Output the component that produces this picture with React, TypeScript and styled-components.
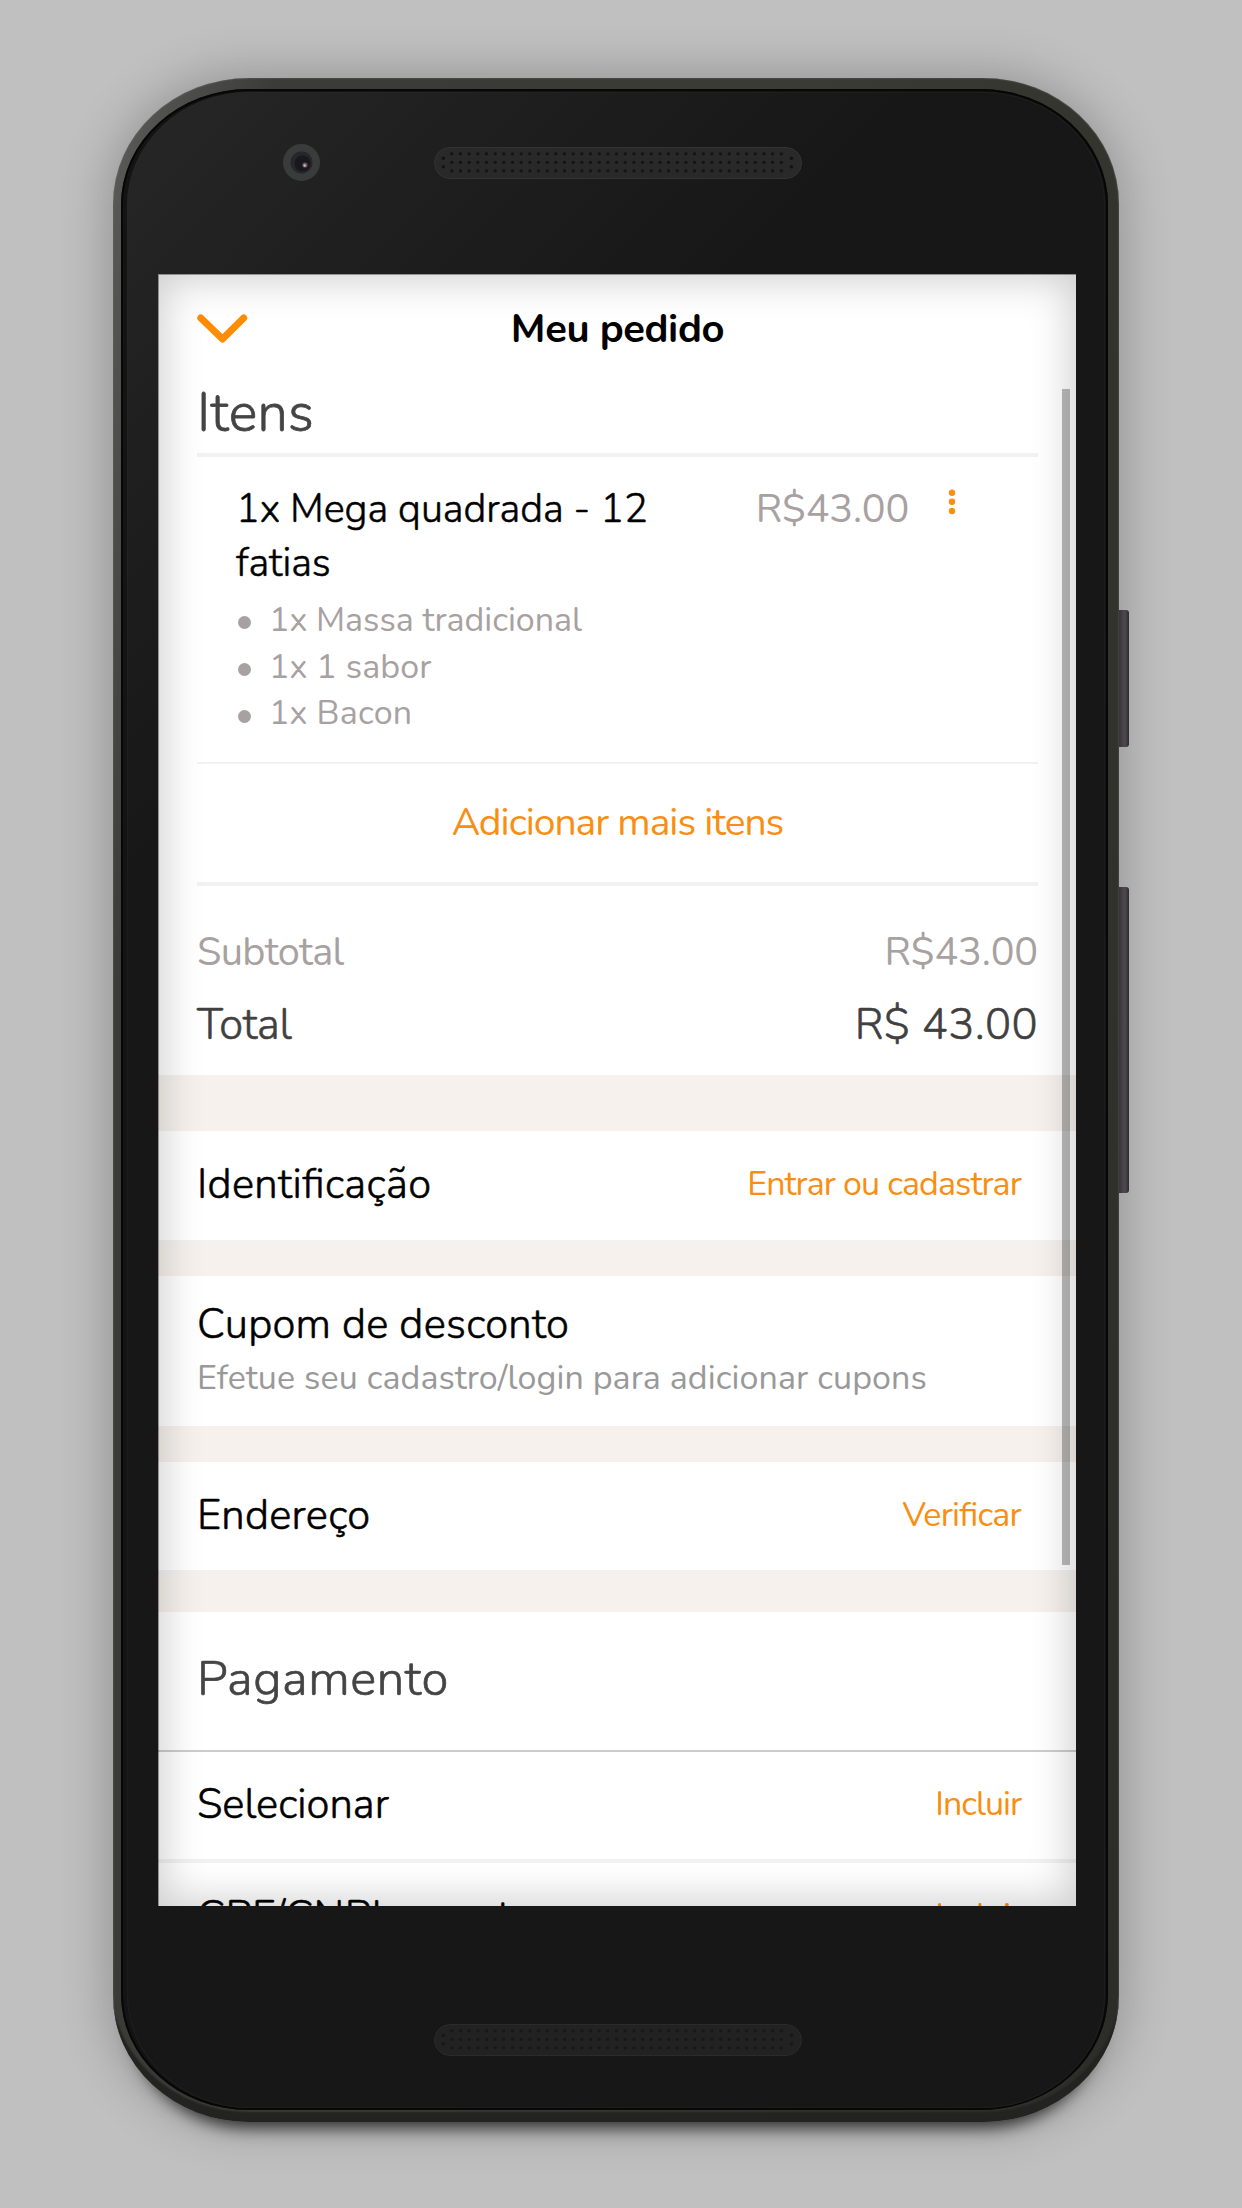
import React from "react";
import styled, { createGlobalStyle, css } from "styled-components";

const GlobalStyle = createGlobalStyle`
  * {
    box-sizing: border-box;
  }

  body {
    margin: 0;
    background-color: #c0c0c0;
    font-family: "Nunito", "Lato", sans-serif;
    font-feature-settings: "liga" 1;
  }

  h1, h2, h3, p, ul {
    margin: 0;
    padding: 0;
    font-weight: 400;
  }
`;

const Stage = styled.div`
  display: flex;
  align-items: flex-start;
  width: 1242px;
  height: 2208px;
  padding: 78px 0 0 113px;
  overflow: hidden;
  background-color: #c0c0c0;
`;

const Phone = styled.div`
  width: 1006px;
  height: 2044px;
  padding: 11px 11px 12px 8px;
  border-radius: 136px / 126px;
  background: linear-gradient(
    100deg,
    #5c5d5b 0%,
    #3b3c38 12%,
    #3a3b34 50%,
    #2c2d28 100%
  );
  box-shadow: 0 0 50px 4px rgba(0, 0, 0, 0.24),
    0 26px 16px -20px rgba(0, 0, 0, 0.7), inset 0 -12px 2px -2px #232422,
    inset 0 0 2px #6c6d6a;
`;

const Bezel = styled.div`
  height: 100%;
  padding: 3px 3px 2px 6px;
  border-radius: 128px / 116px;
  background-color: #141414;
  box-shadow: inset 0 0 0 2px #070707;
`;

const Glass = styled.div`
  height: 100%;
  padding-left: 31px;
  border-radius: 122px / 114px;
  background: linear-gradient(135deg, #272727 0, #1f1f1f 260px, #171717 560px);
  box-shadow: inset 0 0 2px #2e2e2e;
`;

const TopBezel = styled.div`
  display: flex;
  align-items: center;
  height: 182px;
  padding: 0 0 41px 125px;
`;

const BottomBezel = styled.div`
  padding: 118px 0 0 276px;
`;

const Camera = styled.svg`
  width: 37px;
  height: 37px;
  margin-right: 114px;
`;

const SpeakerGrille = styled.svg`
  display: block;
  width: 368px;
  height: 32px;
`;

const SideKeys = styled.div`
  display: flex;
  flex-direction: column;
  gap: 140px;
  padding-top: 532px;
`;

const SideKey = styled.div<{ $height: number }>`
  width: 10px;
  height: ${(p) => p.$height}px;
  border-radius: 0 3px 3px 0;
  background: linear-gradient(to right, #37353a, #4e4a50 60%, #2b2a2c);
`;

const Screen = styled.div`
  position: relative;
  display: flex;
  flex-direction: column;
  width: 918px;
  height: 1632px;
  overflow: hidden;
  background-color: #ffffff;

  /* shading around the edges of the display */
  &::after {
    content: "";
    position: absolute;
    inset: 0;
    box-shadow: inset 1px 1px 0 rgba(0, 0, 0, 0.35),
      inset 0 0 42px 5px rgba(0, 0, 0, 0.2);
    pointer-events: none;
  }
`;

const ScrollThumb = styled.div`
  position: absolute;
  top: 115px;
  right: 6px;
  width: 8px;
  height: 1176px;
  background-color: rgba(0, 0, 0, 0.27);
`;

const Header = styled.header`
  display: grid;
  grid-template-columns: 52px 1fr 52px;
  align-items: center;
  flex-shrink: 0;
  height: 109px;
  padding: 0 37px 0 38px;
`;

const Chevron = styled.svg`
  width: 52px;
  height: 32px;
`;

const HeaderTitle = styled.h1`
  font-size: 40px;
  font-weight: 700;
  line-height: 54px;
  letter-spacing: -0.4px;
  text-align: center;
  color: #000000;
`;

interface TextProps {
  $tracking?: number;
}

const tracking = css<TextProps>`
  letter-spacing: ${(p) => p.$tracking || 0}px;
`;

/* light face with a touch of stroke, sits between light and regular */
const bookWeight = css`
  font-weight: 300;
  -webkit-text-stroke: 0.014em currentColor;
`;

const Content = styled.section`
  flex-shrink: 0;
  margin: 0 38px 0 39px;
`;

const ItemsTitle = styled.h2`
  height: 74px;
  border-bottom: 4px solid #f2f2f2;
  font-size: 54px;
  line-height: 60px;
  letter-spacing: 0.3px;
  color: #444444;
  ${bookWeight}
`;

const Item = styled.div`
  height: 307px;
  padding: 26px 82px 0 39px;
  border-bottom: 2px solid #f2f2f2;
`;

const ItemTop = styled.div`
  display: flex;
  align-items: flex-start;
`;

const ItemName = styled.h3`
  width: 450px;
  font-size: 39.7px;
  line-height: 53.5px;
  letter-spacing: -0.05px;
  color: #000000;
  ${bookWeight}
`;

const ItemPrice = styled.span`
  margin-left: auto;
  font-size: 39.7px;
  line-height: 53.5px;
  letter-spacing: -0.2px;
  color: #a8a1a1;
`;

const MenuDots = styled.svg`
  width: 8px;
  height: 40px;
  margin-left: 39px;
`;

const Options = styled.ul`
  margin-top: 7px;
  list-style: none;
`;

const Option = styled.li<TextProps>`
  display: flex;
  align-items: center;
  font-size: 34px;
  line-height: 46.7px;
  color: #a8a1a1;
  ${tracking}

  &::before {
    content: "";
    width: 13px;
    height: 13px;
    margin: 5px 18px 0 2px;
    border-radius: 50%;
    background-color: #a8a1a1;
  }
`;

const AddMore = styled.button`
  display: block;
  width: 100%;
  height: 122px;
  padding: 0 0 1px;
  border: 0;
  border-bottom: 4px solid #f2f2f2;
  background: none;
  font-family: inherit;
  font-size: 39px;
  letter-spacing: -1px;
  color: #f88f12;
`;

const Totals = styled.div`
  height: 189px;
  padding-top: 39px;
`;

const Subtotal = styled.div`
  display: flex;
  justify-content: space-between;
  font-size: 39.7px;
  line-height: 54px;
  color: #a8a1a1;
`;

const Total = styled.div`
  display: flex;
  justify-content: space-between;
  margin-top: 16px;
  font-size: 43.5px;
  line-height: 60px;
  color: #404040;
  ${bookWeight}
`;

const TotalText = styled.span<TextProps>`
  ${tracking}
`;

const Band = styled.div<{ $height: number; $edge?: boolean }>`
  flex-shrink: 0;
  height: ${(p) => p.$height}px;
  border-top: ${(p) => (p.$edge ? "4px solid #f3f2f1" : "0")};
  background-color: #f6f1ed;
`;

const Row = styled.div<{ $height: number; $border?: boolean }>`
  display: flex;
  align-items: center;
  justify-content: space-between;
  flex-shrink: 0;
  height: ${(p) => p.$height}px;
  padding: 0 55px 3px 39px;
  border-bottom: ${(p) => (p.$border ? "4px solid #f2f2f2" : "0")};
`;

const RowLabel = styled.h3<TextProps>`
  padding-top: 2px;
  font-size: 41.8px;
  line-height: 54px;
  color: #000000;
  ${bookWeight}
  ${tracking}
`;

const RowAction = styled.button<TextProps>`
  padding: 0;
  border: 0;
  background: none;
  font-family: inherit;
  font-feature-settings: inherit;
  font-size: 34px;
  line-height: 46px;
  color: #f88f12;
  ${tracking}
`;

const Coupon = styled.div`
  flex-shrink: 0;
  height: 150px;
  padding: 20px 38px 0 39px;
`;

const CouponHint = styled.p`
  margin-top: 3px;
  font-size: 34px;
  line-height: 47px;
  letter-spacing: 0.09px;
  color: #999999;
`;

const PaymentTitle = styled.h2`
  flex-shrink: 0;
  height: 140px;
  padding: 0 39px;
  border-bottom: 2px solid #cccccc;
  font-size: 49px;
  line-height: 134px;
  letter-spacing: 0.6px;
  color: #444444;
  ${bookWeight}
`;

interface SpeakerProps {
  id: string;
  fill: string;
  rim: string;
  hole: string;
}

const Speaker = ({ id, fill, rim, hole }: SpeakerProps) => (
  <SpeakerGrille viewBox="0 0 368 32">
    <defs>
      <pattern id={id} x="13.5" y="2.6" width="8.67" height="8.5" patternUnits="userSpaceOnUse">
        <circle cx="4.3" cy="4.3" r="1.7" fill={hole} />
      </pattern>
    </defs>
    <rect x="0.5" y="0.5" width="367" height="31" rx="15.5" fill={fill} stroke={rim} />
    <rect x="13.5" y="2.6" width="338" height="25.5" fill={`url(#${id})`} />
    <circle cx="9.3" cy="11.2" r="1.7" fill={hole} />
    <circle cx="9.3" cy="19.7" r="1.7" fill={hole} />
    <circle cx="357.5" cy="11.2" r="1.7" fill={hole} />
    <circle cx="357.5" cy="19.7" r="1.7" fill={hole} />
  </SpeakerGrille>
);

const options = [
  { label: "1x Massa tradicional", tracking: 0 },
  { label: "1x 1 sabor", tracking: 0.1 },
  { label: "1x Bacon", tracking: 0.2 },
];

const App = () => {
  return (
    <>
      <GlobalStyle />
      <Stage>
        <Phone>
          <Bezel>
            <Glass>
              <TopBezel>
                <Camera viewBox="0 0 37 37">
                  <circle cx="18.5" cy="18.5" r="18.5" fill="#3a3b3b" />
                  <circle cx="18.5" cy="18.5" r="11" fill="#26272b" />
                  <circle cx="19.5" cy="19.5" r="8" fill="#19181f" />
                  <circle cx="22" cy="21" r="2.6" fill="#6b565c" />
                  <circle cx="21.7" cy="21.5" r="1.2" fill="#c9b9be" />
                </Camera>
                <Speaker id="earpiece" fill="#292929" rim="#333333" hole="#131313" />
              </TopBezel>

              <Screen>
                <Header>
                  <Chevron viewBox="0 0 52 32">
                    <path
                      d="M4.8 5 L26.5 26 L47.7 5"
                      fill="none"
                      stroke="#ff8c05"
                      strokeWidth="7"
                      strokeLinecap="round"
                      strokeLinejoin="round"
                    />
                  </Chevron>
                  <HeaderTitle>Meu pedido</HeaderTitle>
                </Header>

                <Content>
                  <ItemsTitle>Itens</ItemsTitle>
                  <Item>
                    <ItemTop>
                      <ItemName>1x Mega quadrada - 12 fatias</ItemName>
                      <ItemPrice>R$43.00</ItemPrice>
                      <MenuDots viewBox="0 0 8 40">
                        <circle cx="4" cy="9.7" r="3.2" fill="#f78f14" />
                        <circle cx="4" cy="18.8" r="3.2" fill="#f78f14" />
                        <circle cx="4" cy="28" r="3.2" fill="#f78f14" />
                      </MenuDots>
                    </ItemTop>
                    <Options>
                      {options.map((option) => (
                        <Option key={option.label} $tracking={option.tracking}>
                          {option.label}
                        </Option>
                      ))}
                    </Options>
                  </Item>
                  <AddMore>Adicionar mais itens</AddMore>
                  <Totals>
                    <Subtotal>
                      <TotalText $tracking={-0.65}>Subtotal</TotalText>
                      <TotalText $tracking={-0.15}>R$43.00</TotalText>
                    </Subtotal>
                    <Total>
                      <TotalText $tracking={-0.2}>Total</TotalText>
                      <TotalText $tracking={0.45}>R$ 43.00</TotalText>
                    </Total>
                  </Totals>
                </Content>

                <Band $height={56} />
                <Row $height={109}>
                  <RowLabel $tracking={0.35}>Identificação</RowLabel>
                  <RowAction $tracking={-0.88}>Entrar ou cadastrar</RowAction>
                </Row>

                <Band $height={36} $edge />
                <Coupon>
                  <RowLabel $tracking={0.25}>Cupom de desconto</RowLabel>
                  <CouponHint>
                    Efetue seu cadastro/login para adicionar cupons
                  </CouponHint>
                </Coupon>

                <Band $height={36} />
                <Row $height={108}>
                  <RowLabel $tracking={0.25}>Endereço</RowLabel>
                  <RowAction $tracking={-0.75}>Verificar</RowAction>
                </Row>

                <Band $height={42} $edge />
                <PaymentTitle>Pagamento</PaymentTitle>
                <Row $height={111} $border>
                  <RowLabel>Selecionar</RowLabel>
                  <RowAction $tracking={-1.05}>Incluir</RowAction>
                </Row>
                <Row $height={109}>
                  <RowLabel $tracking={0.45}>CPF/CNPJ na nota</RowLabel>
                  <RowAction $tracking={-1.05}>Incluir</RowAction>
                </Row>

                <ScrollThumb />
              </Screen>

              <BottomBezel>
                <Speaker id="loudspeaker" fill="#222222" rim="#2b2b2b" hole="#171717" />
              </BottomBezel>
            </Glass>
          </Bezel>
        </Phone>
        <SideKeys>
          <SideKey $height={137} />
          <SideKey $height={306} />
        </SideKeys>
      </Stage>
    </>
  );
};

export default App;
